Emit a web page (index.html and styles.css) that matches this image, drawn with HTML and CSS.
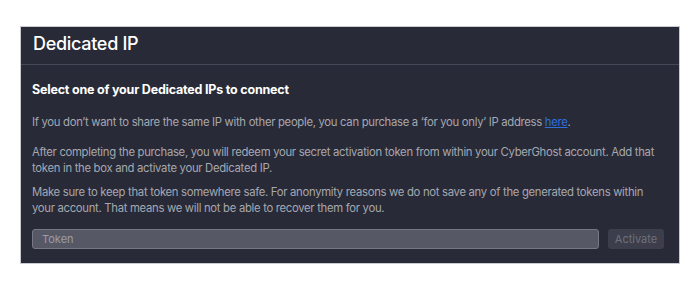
FILE: index.html
```html
<!DOCTYPE html>
<html lang="en">
<head>
<meta charset="utf-8">
<title>Dedicated IP</title>
<link rel="stylesheet" href="styles.css">
</head>
<body>
<section class="panel">
  <header class="panel-header">
    <h1 class="panel-title">Dedicated IP</h1>
  </header>
  <div class="panel-body">
    <h2 class="subtitle">Select one of your Dedicated IPs to connect</h2>
    <p class="text text-first">If you don’t want to share the same IP with other people, you can purchase a ‘for you only’ IP address <a class="link" href="#">here</a>.</p>
    <p class="text">After completing the purchase, you will redeem your secret activation token from within your CyberGhost account. Add that token in the box and activate your Dedicated IP.</p>
    <p class="text">Make sure to keep that token somewhere safe. For anonymity reasons we do not save any of the generated tokens within your account. That means we will not be able to recover them for you.</p>
    <form class="token-row">
      <input class="token-input" type="text" placeholder="Token">
      <button class="activate-btn" type="button" disabled>Activate</button>
    </form>
  </div>
</section>
</body>
</html>
```

FILE: styles.css
```css
html, body {
  margin: 0;
  padding: 0;
  background: #ffffff;
}
body {
  font-family: Inter, "Noto Sans", "Liberation Sans", sans-serif;
  padding-top: 26px;
}
.panel {
  margin: 0 20px;
  width: 660px;
  box-sizing: border-box;
  height: 238px;
  background: #282a37;
  border: 1px solid #c9cad0;
  display: flex;
  flex-direction: column;
}
.panel-header {
  height: 38px;
  box-sizing: border-box;
  border-bottom: 1px solid #454757;
  display: flex;
  align-items: center;
  padding: 0 0 5px 12px;
}
.panel-title {
  margin: 0;
  font-size: 18px;
  font-weight: 500;
  color: #ffffff;
  letter-spacing: -0.3px;
}
.panel-body {
  padding: 17px 15px 0 11px;
  display: flex;
  flex-direction: column;
}
.subtitle {
  margin: 0 0 16px 0;
  font-size: 12.5px;
  font-weight: 700;
  color: #ffffff;
  line-height: 16px;
  letter-spacing: -0.2px;
}
.text {
  margin: 0 0 8px 0;
  font-size: 11.3px;
  line-height: 16px;
  letter-spacing: -0.3px;
  color: #a6a8b0;
}
.text-first {
  margin-bottom: 14px;
}
.link {
  color: #2d6fdc;
  text-decoration: underline;
}
.token-row {
  margin: 5px 0 0 0;
  display: flex;
  gap: 9px;
  height: 20px;
}
.token-input {
  flex: 1;
  box-sizing: border-box;
  height: 20px;
  margin: 0;
  padding: 0 9px;
  background: #575866;
  border: 1px solid #777885;
  border-radius: 3px;
  font-family: inherit;
  font-size: 11px;
  color: #d0d1d6;
  outline: none;
}
.token-input::placeholder {
  color: #9b9ca5;
}
.activate-btn {
  width: 56px;
  height: 20px;
  box-sizing: border-box;
  margin: 0;
  padding: 0;
  background: #3c3e4b;
  border: none;
  border-radius: 3px;
  font-family: inherit;
  font-size: 11px;
  color: #6e707c;
}
```
